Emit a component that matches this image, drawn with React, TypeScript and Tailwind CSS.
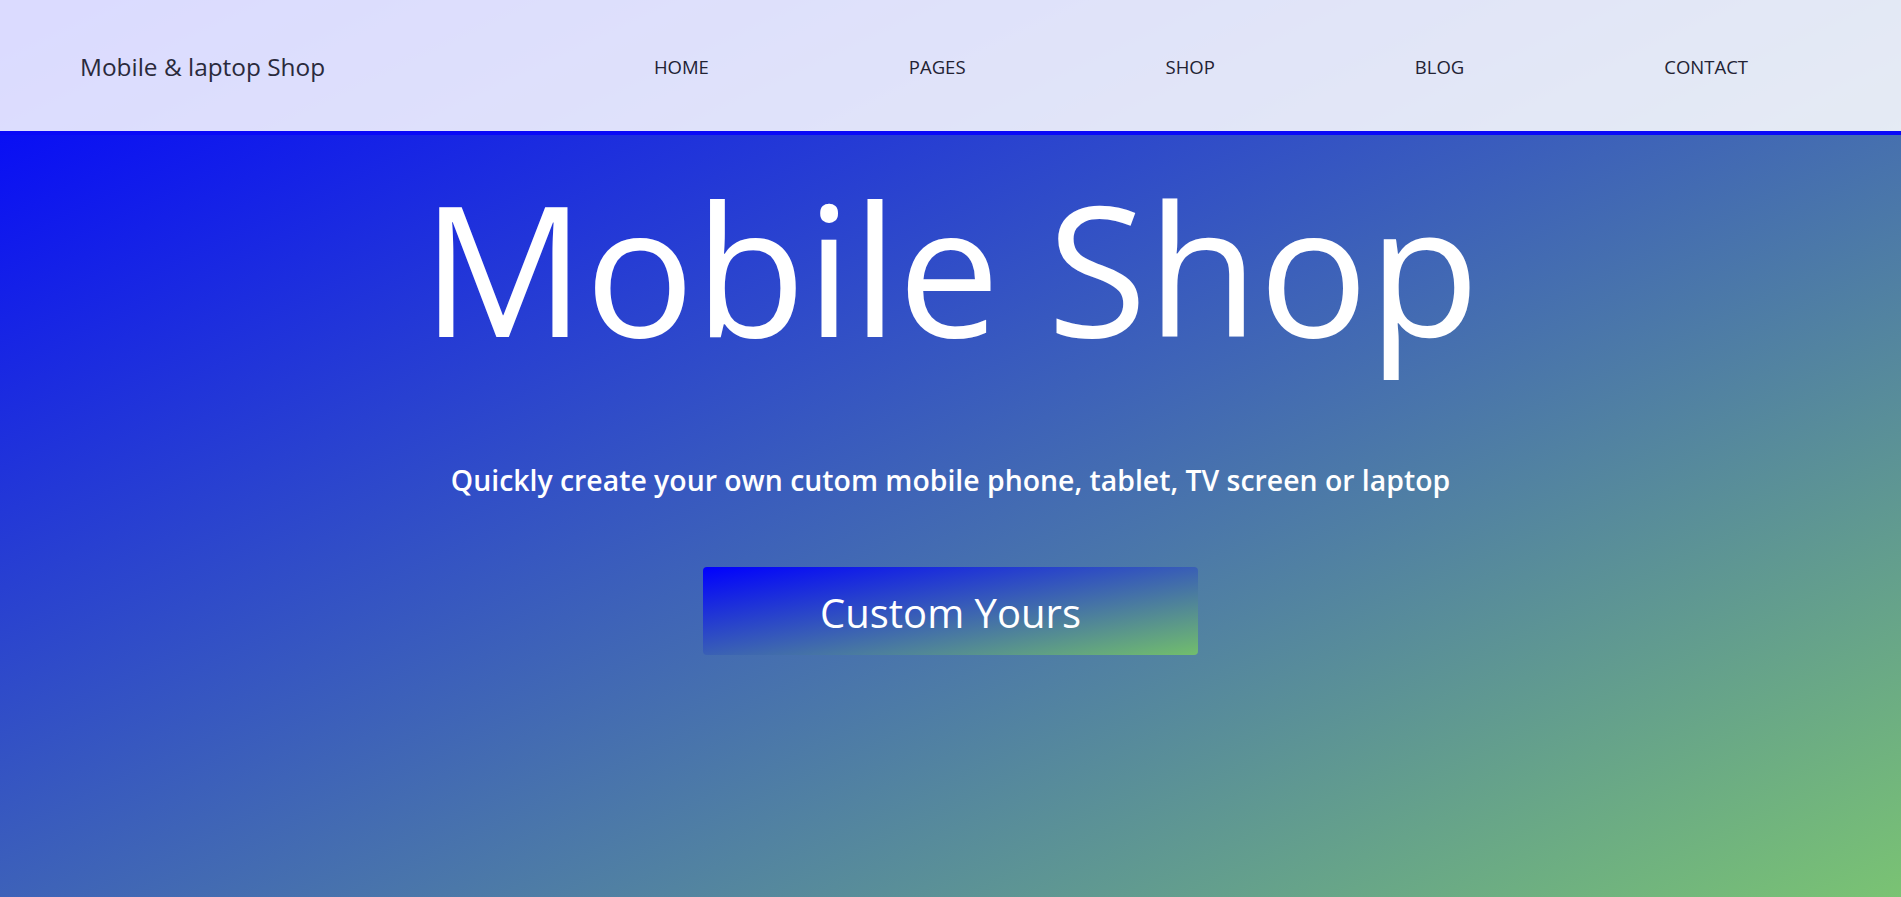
const navLinks = ["HOME", "PAGES", "SHOP", "BLOG", "CONTACT"]

export default function App() {
  return (
    <div
      className="min-h-[897px] w-full bg-[linear-gradient(to_bottom_right,#0000ff,#7ac373)] text-white"
      style={{ fontFamily: '"Segoe UI", "Open Sans", sans-serif' }}
    >
      <header className="flex h-[135px] items-center justify-between border-b-4 border-[#0909f7] bg-white/[0.86] pt-[4px] pl-[80px] pr-[153px]">
        <a href="#" className="text-[24.4px] leading-none text-[#2a2a3c]">
          Mobile &amp; laptop Shop
        </a>
        <nav className="flex items-center gap-[200px]">
          {navLinks.map((link) => (
            <a key={link} href="#" className="text-[18.5px] leading-none text-[#222233]">
              {link}
            </a>
          ))}
        </nav>
      </header>

      <section className="flex flex-col items-center pt-[40px]">
        <h1 className="text-[182px] font-normal leading-none">Mobile Shop</h1>
        <p className="mt-[109px] text-[28.4px] font-semibold leading-none">
          Quickly create your own cutom mobile phone, tablet, TV screen or laptop
        </p>
        <button className="mt-[73px] flex h-[88px] w-[495px] items-center justify-center rounded-[4px] bg-[linear-gradient(to_bottom_right,#0000ff,#72be6c)] pt-[4px] text-[40px] leading-none text-white">
          Custom Yours
        </button>
      </section>
    </div>
  )
}
